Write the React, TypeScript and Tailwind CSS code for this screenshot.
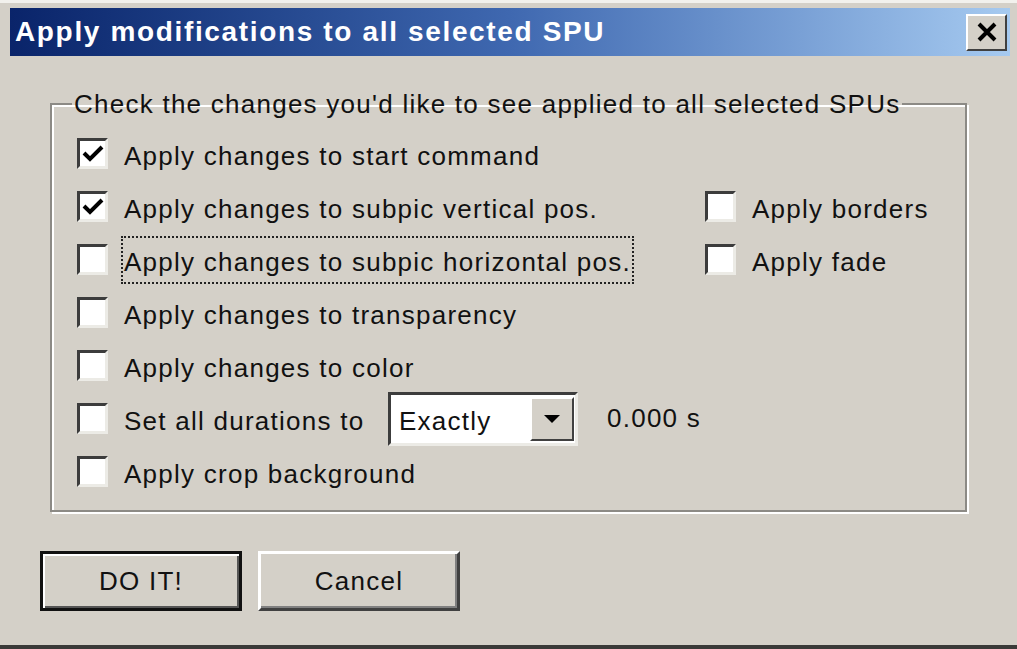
import React from 'react';

const font = "font-['Liberation_Sans',Arial,sans-serif]";

function Box({ checked }: { checked?: boolean }) {
  return (
    <span className="w-[31px] h-[31px] shrink-0 bg-white border-[3px] border-t-[#3c3c3c] border-l-[#3c3c3c] border-b-[#ecebe6] border-r-[#ecebe6] flex items-center justify-center">
      {checked && (
        <svg width="22" height="20" viewBox="0 0 22 20">
          <path d="M2 9 L8 15 L20 3" fill="none" stroke="#000" strokeWidth="4" />
        </svg>
      )}
    </span>
  );
}

function Row({ checked, label, focus }: { checked?: boolean; label: string; focus?: boolean }) {
  return (
    <div className="flex items-center gap-[13px]">
      <Box checked={checked} />
      <span className={focus ? 'border-2 border-dotted border-[#222] px-[1px] pt-[9px] pb-[5px] leading-[30px]' : 'px-[3px] pt-[4px] leading-[30px]'}>
        {label}
      </span>
    </div>
  );
}

export default function App() {
  return (
    <div className={`w-[1017px] h-[649px] bg-[#d4d0c8] border-t-[3px] border-t-[#f2f1ed] border-b-[4px] border-b-[#3a3a38] pt-[5px] pl-[10px] pr-[7px] text-[#111] tracking-[1.25px] ${font}`}>
      {/* Title bar */}
      <div className="h-[48px] flex items-center justify-between pl-[5px] pr-[3px] bg-gradient-to-r from-[#0a246a] via-[#3f68b0] to-[#a6caf0]">
        <span className="text-white font-bold text-[28px] leading-none tracking-[1.65px]">Apply modifications to all selected SPU</span>
        <span className="w-[41px] h-[37px] bg-[#d4d0c8] border-2 border-t-white border-l-white border-b-[#404040] border-r-[#404040] flex items-center justify-center">
          <svg width="22" height="20" viewBox="0 0 22 20">
            <path d="M3 2 L19 18 M19 2 L3 18" stroke="#000" strokeWidth="4" />
          </svg>
        </span>
      </div>

      {/* Group box */}
      <fieldset className="ml-[40px] mt-[33px] w-[917px] h-[423px] border-2 border-[#8c8a85] shadow-[inset_2px_2px_0_#fff,2px_2px_0_#fff] pl-[25px] pt-[8px] text-[26px]">
        <legend className="ml-[-5px] px-[2px] leading-[30px]">Check the changes you'd like to see applied to all selected SPUs</legend>
        <div className="flex flex-col">
          <div className="h-[53px] flex items-center">
            <Row checked label="Apply changes to start command" />
          </div>
          <div className="h-[53px] flex items-center">
            <div className="w-[628px]"><Row checked label="Apply changes to subpic vertical pos." /></div>
            <Row label="Apply borders" />
          </div>
          <div className="h-[53px] flex items-center">
            <div className="w-[628px]"><Row focus label="Apply changes to subpic horizontal pos." /></div>
            <Row label="Apply fade" />
          </div>
          <div className="h-[53px] flex items-center">
            <Row label="Apply changes to transparency" />
          </div>
          <div className="h-[53px] flex items-center">
            <Row label="Apply changes to color" />
          </div>
          <div className="h-[53px] flex items-center">
            <div className="w-[311px]"><Row label="Set all durations to" /></div>
            <div className="w-[190px] h-[54px] bg-white border-[3px] border-t-[#3c3c3c] border-l-[#3c3c3c] border-b-[#ecebe6] border-r-[#ecebe6] flex items-center justify-between pl-[8px] pr-[1px]">
              <span className="leading-none pt-[4px]">Exactly</span>
              <span className="w-[44px] h-[44px] bg-[#d4d0c8] border-2 border-t-white border-l-white border-b-[#404040] border-r-[#404040] flex items-center justify-center">
                <svg width="18" height="10" viewBox="0 0 18 10">
                  <path d="M1 1 L17 1 L9 9 Z" fill="#000" />
                </svg>
              </span>
            </div>
            <span className="ml-[29px]">0.000 s</span>
          </div>
          <div className="h-[53px] flex items-center">
            <Row label="Apply crop background" />
          </div>
        </div>
      </fieldset>

      {/* Buttons */}
      <div className="flex gap-[16px] ml-[30px] mt-[39px] text-[26px]">
        <button className="w-[202px] h-[60px] bg-[#d4d0c8] border-[3px] border-[#111] shadow-[inset_2px_2px_0_#fff,inset_-2px_-2px_0_#555] flex items-center justify-center">
          DO IT!
        </button>
        <button className="w-[202px] h-[60px] bg-[#d4d0c8] border-[3px] border-t-white border-l-white border-b-[#404040] border-r-[#404040] shadow-[inset_-2px_-2px_0_#808080] flex items-center justify-center">
          Cancel
        </button>
      </div>
    </div>
  );
}
